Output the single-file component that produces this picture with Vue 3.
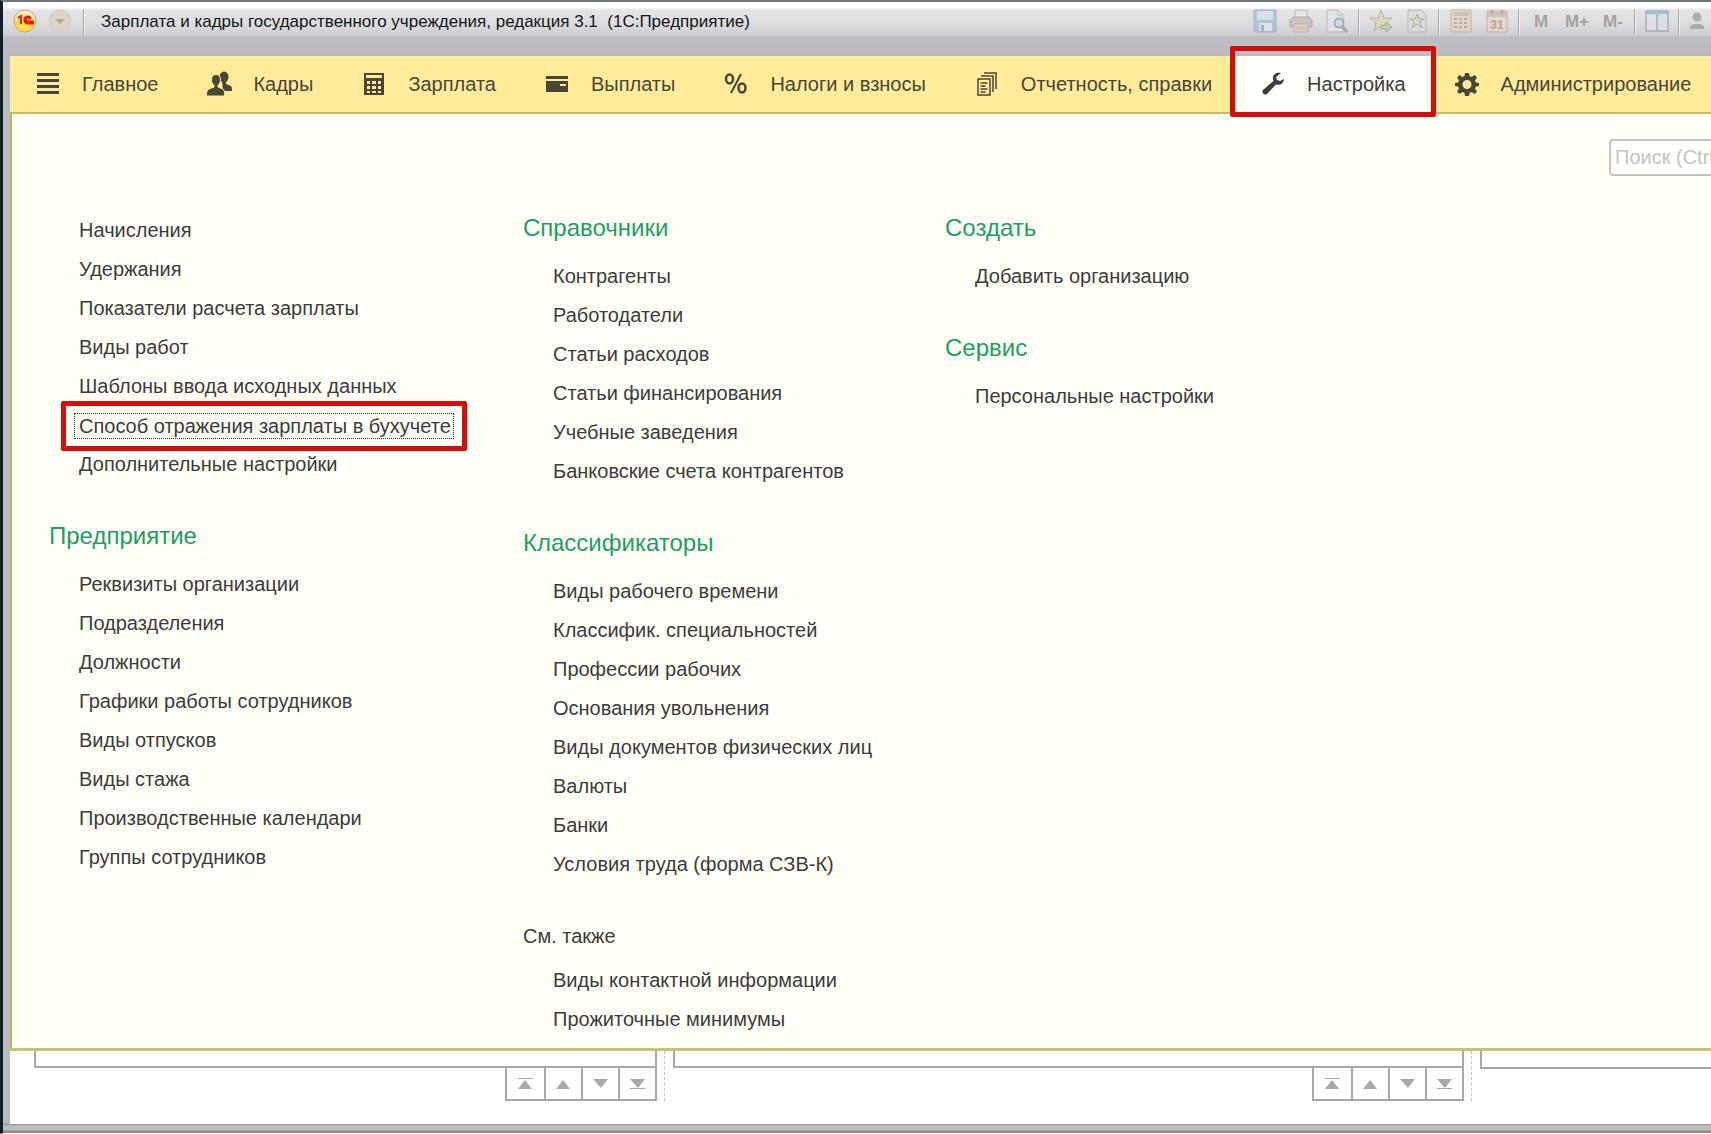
<script setup>
const nav = [
  { id: 'main', label: 'Главное' },
  { id: 'staff', label: 'Кадры' },
  { id: 'salary', label: 'Зарплата' },
  { id: 'pay', label: 'Выплаты' },
  { id: 'tax', label: 'Налоги и взносы' },
  { id: 'reports', label: 'Отчетность, справки' },
  { id: 'setup', label: 'Настройка', active: true },
  { id: 'admin', label: 'Администрирование' },
]

const focused = 'Способ отражения зарплаты в бухучете'

const columns = [
  [
    {
      links: [
        'Начисления',
        'Удержания',
        'Показатели расчета зарплаты',
        'Виды работ',
        'Шаблоны ввода исходных данных',
        focused,
        'Дополнительные настройки',
      ],
    },
    {
      title: 'Предприятие',
      links: [
        'Реквизиты организации',
        'Подразделения',
        'Должности',
        'Графики работы сотрудников',
        'Виды отпусков',
        'Виды стажа',
        'Производственные календари',
        'Группы сотрудников',
      ],
    },
  ],
  [
    {
      title: 'Справочники',
      links: [
        'Контрагенты',
        'Работодатели',
        'Статьи расходов',
        'Статьи финансирования',
        'Учебные заведения',
        'Банковские счета контрагентов',
      ],
    },
    {
      title: 'Классификаторы',
      links: [
        'Виды рабочего времени',
        'Классифик. специальностей',
        'Профессии рабочих',
        'Основания увольнения',
        'Виды документов физических лиц',
        'Валюты',
        'Банки',
        'Условия труда (форма СЗВ-К)',
      ],
    },
    {
      title: 'См. также',
      plain: true,
      links: ['Виды контактной информации', 'Прожиточные минимумы'],
    },
  ],
  [
    { title: 'Создать', links: ['Добавить организацию'] },
    { title: 'Сервис', links: ['Персональные настройки'] },
  ],
]

const pagers = [
  { label: 'В начало', d: 'M0 0h15v1H0zM7 2l7 9H0z' },
  { label: 'Вверх', d: 'M7 2l7 9H0z' },
  { label: 'Вниз', d: 'M0 1h15l-7 9z' },
  { label: 'В конец', d: 'M0 1h15l-7 9zM0 10h15v1H0z' },
]
</script>

<template>
  <div class="window">
    <header class="titlebar">
      <button class="orb" aria-label="Меню приложения">
        <svg width="24" height="24" viewBox="0 0 24 24">
          <defs>
            <radialGradient id="orb" cx="50%" cy="80%" r="75%">
              <stop offset="0" stop-color="#ffe23a" />
              <stop offset="0.6" stop-color="#fbd562" />
              <stop offset="1" stop-color="#fff3d4" />
            </radialGradient>
          </defs>
          <circle cx="12" cy="12" r="11" fill="url(#orb)" stroke="#c9a57c" />
          <path d="M5 9l3-2v8M18 9.500a3.500 3.500 0 1 0-3 5h6M17 10.500a2 2 0 1 0-2 2h6" fill="none" stroke="#d9231a" stroke-width="1.800" />
        </svg>
      </button>
      <button class="orb" aria-label="Настройка панели">
        <svg width="24" height="24" viewBox="0 0 24 24">
          <circle cx="12" cy="12" r="11" fill="#dcd3c8" stroke="#d3cabf" />
          <path d="M7 10h10l-5 5z" fill="#b9a994" />
        </svg>
      </button>
      <span class="sep"></span>
      <h1 class="caption">Зарплата и кадры государственного учреждения, редакция 3.1&nbsp; (1С:Предприятие)</h1>

      <div class="tools">
        <div class="group">
          <button aria-label="Сохранить">
            <svg width="24" height="24" viewBox="0 0 24 24">
              <path d="M1 1h22v22H3l-2-2z" fill="#a9bfd6" stroke="#8fa9c4" />
              <path d="M4 2h16v9H4z" fill="#d3dde8" />
              <path d="M6 14h13v8H6z" fill="#dfe3e8" />
              <path d="M8 16h3v6H8z" fill="#8fa9c4" />
            </svg>
          </button>
          <button aria-label="Печать">
            <svg width="24" height="24" viewBox="0 0 24 24">
              <path d="M6 1h12v9H6z" fill="#e6e6e8" stroke="#b4b0ae" />
              <path d="M1 11l3-3h16l3 3v7H1z" fill="#c6bfbb" stroke="#aaa29d" />
              <path d="M5 15h14v8H5z" fill="#e3d3cb" stroke="#b9a79f" />
              <path d="M7 18h10M7 20h10" stroke="#d5a295" />
            </svg>
          </button>
          <button aria-label="Просмотр">
            <svg width="24" height="24" viewBox="0 0 24 24">
              <path d="M2 1h11l5 5v17H2z" fill="#e2e4e8" stroke="#b0b3b8" />
              <path d="M13 1v5h5" fill="none" stroke="#b0b3b8" />
              <circle cx="14" cy="14" r="4.500" fill="#cddae6" stroke="#9ca4ac" stroke-width="2" />
              <path d="M17 17l5 6" stroke="#a99b90" stroke-width="3" />
            </svg>
          </button>
        </div>
        <span class="sep"></span>
        <div class="group">
          <button aria-label="Добавить в избранное">
            <svg width="24" height="24" viewBox="0 0 24 24">
              <path d="M12 1l3 8h8l-6 5 2 8-7-5-7 5 2-8-6-5h8z" fill="#dcd5bd" stroke="#b1a88e" />
              <path d="M12 16h5v-3l6 5-6 5v-3h-5z" fill="#b9cfa6" stroke="#8fa97c" />
            </svg>
          </button>
          <button aria-label="Избранное">
            <svg width="24" height="24" viewBox="0 0 24 24">
              <path d="M3 1h13l5 5v17H3z" fill="#dcdcde" stroke="#b0b0b3" />
              <path d="M12 5l2 5h5l-4 3 2 6-5-4-5 4 2-6-4-3h5z" fill="#d9d3c4" stroke="#aaa496" />
            </svg>
          </button>
        </div>
        <span class="sep"></span>
        <div class="group">
          <button aria-label="Калькулятор">
            <svg width="24" height="24" viewBox="0 0 24 24">
              <path d="M2 1h20v22H2z" fill="#ddd6c8" stroke="#bfae9a" />
              <path d="M4 3h16v4H4z" fill="#c5bca8" />
              <path d="M5 10h14M5 14h14M5 18h14" stroke="#bb9f8b" stroke-width="2" stroke-dasharray="3 2" />
            </svg>
          </button>
          <button aria-label="Календарь">
            <svg width="24" height="24" viewBox="0 0 24 24">
              <path d="M2 2h20v21H2z" fill="#e2d8d1" stroke="#c6a597" />
              <path d="M2 3h20v5H2z" fill="#cfb6aa" />
              <path d="M7 1v4M17 1v4" stroke="#a99a92" stroke-width="2" />
              <text x="12" y="20" class="day" text-anchor="middle">31</text>
            </svg>
          </button>
        </div>
        <span class="sep"></span>
        <div class="group">
          <button>M</button>
          <button>M+</button>
          <button>M-</button>
        </div>
        <span class="sep"></span>
        <div class="group">
          <button aria-label="Окна">
            <svg width="24" height="24" viewBox="0 0 24 24">
              <path d="M1 2h22v20H1zM12 2v20" fill="#dcdfe4" stroke="#97a6b8" stroke-width="1.500" />
              <path d="M1 1h22v4H1z" fill="#9fb1c7" />
            </svg>
          </button>
        </div>
        <span class="sep"></span>
        <div class="group">
          <button class="cut" aria-label="Пользователь">
            <svg width="16" height="24" viewBox="0 0 16 24">
              <circle cx="8" cy="8" r="4.500" fill="#9fa1a5" />
              <path d="M1 20v-3l4-2h6l4 2v3z" fill="#9fa1a5" />
            </svg>
          </button>
        </div>
      </div>
    </header>

    <div class="client">
      <nav class="sections">
        <a v-for="item in nav" :key="item.id" href="#" class="section" :class="{ active: item.active }">
          <svg class="glyph" width="24" height="24" viewBox="0 0 24 24">
            <path v-if="item.id === 'main'" d="M1 1h22v3H1zM1 7h22v3H1zM1 13h22v3H1zM1 19h22v3H1z" />
            <g v-else-if="item.id === 'staff'">
              <ellipse cx="17" cy="5" rx="4.500" ry="5.500" />
              <path d="M15 9h4v3l5 2c1 1 1 4 1 5h-9z" />
              <path d="M9 2.500c3 0 4.500 2 4.500 5.500 0 2-1 4-2.500 5.500v1.500l5 2c1 1 2 3 1.500 7H-.500c0-4 .500-6 2.500-7l5-2v-1.500C5.500 12 4.500 10 4.500 8c0-3.500 1.500-5.500 4.500-5.500z" stroke="#feec9b" />
            </g>
            <path v-else-if="item.id === 'salary'" fill-rule="evenodd" d="M2 1h20v22H2zM4 3v3h16V3zM5 9v3h3V9zM10 9v3h4V9zM16 9v3h3V9zM5 14v3h3v-3zM10 14v3h4v-3zM16 14v3h3v-3zM5 19v2h3v-2zM10 19v2h4v-2zM16 19v2h3v-2z" />
            <path v-else-if="item.id === 'pay'" fill-rule="evenodd" d="M1 4h22v3H1zM1 9h22v11H1zM15 12v2h6v-2z" />
            <g v-else-if="item.id === 'tax'" fill="none" stroke="#4a4636">
              <ellipse cx="5.500" cy="7" rx="3.500" ry="4.500" stroke-width="2.500" />
              <ellipse cx="18" cy="16" rx="3.500" ry="4.500" stroke-width="2.500" />
              <path d="M17 2L7 21" stroke-width="2" />
            </g>
            <g v-else-if="item.id === 'reports'" fill="none" stroke="#4a4636" stroke-width="1.500">
              <path d="M3 7h12v16H3zM6 4h12v16M9 1h12v16" />
              <path d="M5.500 11h7M5.500 14h5M5.500 17h7M5.500 20h5" />
            </g>
            <path v-else-if="item.id === 'setup'" d="M20 1c-4-1-8 1-8 5 0 1 0 2 .500 3L2 18c-2 2 1 6 4 4l9-9.500c4 1 8-1 8-5.500l-4 2-3-1-1-3z" />
            <path v-else fill-rule="evenodd" d="M10 1h4l.500 3 2 1 3-2 2.500 2.500-2 3 1 2 3 .500v3l-3 .500-1 2 2 3-2.500 2.500-3-2-2 1-.500 3h-4l-.500-3-2-1-3 2L2 19.500l2-3-1-2L0 14v-3l3-.500 1-2-2-3L4.500 3l3 2 2-1zM12 8a4.500 4.500 0 1 0 0 9 4.500 4.500 0 0 0 0-9z" />
          </svg>
          <span>{{ item.label }}</span>
          <span v-if="item.active" class="marker"></span>
        </a>
      </nav>

      <main class="panel">
        <form class="search">
          <input type="search" placeholder="Поиск (Ctrl+F)" aria-label="Поиск" />
        </form>
        <div class="columns">
          <div v-for="(column, c) in columns" :key="c" class="column">
            <section v-for="(block, b) in column" :key="b" class="block">
              <h2 v-if="block.title" :class="{ plain: block.plain }">{{ block.title }}</h2>
              <ul>
                <li v-for="link in block.links" :key="link">
                  <a href="#" :class="{ focused: link === focused }">{{ link }}<span v-if="link === focused" class="marker"></span></a>
                </li>
              </ul>
            </section>
          </div>
        </div>
      </main>

      <footer class="lists">
        <div v-for="n in 3" :key="n" class="list" :class="'list-' + n">
          <div class="tail"></div>
          <div v-if="n < 3" class="pager">
            <button v-for="p in pagers" :key="p.label" :aria-label="p.label">
              <svg width="15" height="12" viewBox="0 0 15 12"><path :d="p.d" fill="#a9a9ab" /></svg>
            </button>
          </div>
        </div>
      </footer>
    </div>
  </div>
</template>

<style>
body {
  margin: 0;
}
</style>

<style scoped>
* {
  box-sizing: border-box;
}

.window {
  display: flex;
  flex-direction: column;
  min-height: 100vh;
  padding-bottom: 9px;
  overflow: hidden;
  border-top: 2px solid #70787a;
  border-left: 3px solid #10202a;
  border-bottom: 1px solid #ffffff;
  background: linear-gradient(to top, #8e8e91 0, #8e8e91 2px, #bdbdc0 3px, #bdbdc0 7px, #97979a 9px, #b9bbbd 10px);
  color: #3c3c3c;
  font-family: "Liberation Sans", Arial, sans-serif;
  font-size: 20px;
}

button {
  padding: 0;
  border: 0;
  background: none;
  font: inherit;
  color: inherit;
}

a {
  color: inherit;
  text-decoration: none;
}

svg {
  display: block;
}

.titlebar {
  display: flex;
  align-items: flex-start;
  height: 54px;
  padding: 7px 0 0 10px;
  background: linear-gradient(#ffffff 0, #ffffff 5px, #e4e4e7 8px, #dedee1 20px, #cfcfd3 33px, #bfbec5 35px, #bcbbc2 53px);
}

.orb {
  margin-right: 11px;
}

.sep {
  width: 2px;
  height: 26px;
  margin: 0 9px;
  background: linear-gradient(to right, #a7a7ad 50%, #f0f0f2 50%);
}

.orb + .sep {
  margin: 0;
}

.caption {
  flex: 1;
  margin: 0 0 0 16px;
  color: #161616;
  font-size: 17px;
  font-weight: 400;
  line-height: 26px;
  white-space: nowrap;
}

.tools,
.group {
  display: flex;
}

.group {
  gap: 12px;
}

.group button {
  display: flex;
  justify-content: center;
  width: 24px;
  color: #a5a29f;
  font-size: 17px;
  font-weight: 700;
  line-height: 26px;
}

.group svg {
  opacity: 0.8;
}

.group .cut {
  width: 22px;
  justify-content: flex-start;
}

.day {
  fill: #c98f7e;
  font-size: 12px;
  font-weight: 700;
}

.client {
  display: flex;
  flex: 1;
  flex-direction: column;
  margin-left: 7px;
  background: #fefefe;
}

.sections {
  display: flex;
  height: 58px;
  padding-left: 1px;
  border-bottom: 2px solid #c8ba66;
  background: #feec9b;
}

.section {
  position: relative;
  display: flex;
  flex: none;
  align-items: center;
  gap: 22px;
  height: 56px;
  padding: 0 24px 0 25px;
  color: #4a4636;
  white-space: nowrap;
}

.section.active {
  background: #fffffa;
  color: #3c3c3c;
}

.glyph {
  overflow: visible;
  fill: currentColor;
}

.marker {
  position: absolute;
  inset: -10px -6px -5px;
  border: 5px solid #d90c0c;
  border-radius: 2px;
}

.panel {
  padding: 25px 0 9px;
  border-bottom: 3px solid #c1c47c;
  border-left: 2px solid #c1b468;
  background: #fffff8;
}

.search {
  display: flex;
  justify-content: flex-end;
  overflow: hidden;
}

.search input {
  flex: none;
  width: 182px;
  height: 37px;
  margin-right: -80px;
  padding: 0 4px;
  border: 2px solid #c4c4c4;
  border-radius: 4px;
  background: #fffffc;
  font: inherit;
}

.search input::placeholder {
  color: #c4c4c0;
}

.columns {
  display: grid;
  grid-template-columns: 474px 422px 1fr;
  padding: 35px 0 0 37px;
}

.column {
  display: flex;
  flex-direction: column;
  gap: 35px;
}

h2 {
  margin: 0 0 12px;
  color: #1d9f62;
  font-size: 24px;
  font-weight: 400;
  line-height: 34px;
}

h2.plain {
  margin-bottom: 8px;
  color: #3c3c3c;
  font-size: 20px;
}

ul {
  margin: 0;
  padding: 0 0 0 30px;
  list-style: none;
}

li {
  display: flex;
  align-items: center;
  height: 39px;
}

li a {
  white-space: nowrap;
}

.focused {
  position: relative;
  margin-left: -5px;
  padding: 0 2px 0 4px;
  border: 1px dotted #333333;
  line-height: 24px;
}

.focused .marker {
  inset: -13px -14px;
}

.lists {
  display: flex;
  flex: 1;
  padding-left: 24px;
}

.list {
  display: flex;
  flex-direction: column;
  flex: none;
  height: 50px;
}

.list-1 {
  width: 631px;
}

.list-2 {
  width: 807px;
}

.list-1,
.list-2 {
  padding-right: 7px;
  border-right: 1px dashed #c4c4c4;
}

.list-2,
.list-3 {
  padding-left: 8px;
}

.list-3 {
  flex: 1;
}

.tail {
  height: 18px;
  border: solid #a9a9ab;
  border-width: 0 2px 2px;
}

.list-3 .tail {
  border-right: 0;
}

.pager {
  display: flex;
  align-self: flex-end;
  margin-top: -2px;
  border: 2px solid #a9a9ab;
}

.pager button {
  display: flex;
  align-items: center;
  justify-content: center;
  width: 37px;
  height: 31px;
}

.pager button + button {
  border-left: 2px solid #a9a9ab;
}
</style>
